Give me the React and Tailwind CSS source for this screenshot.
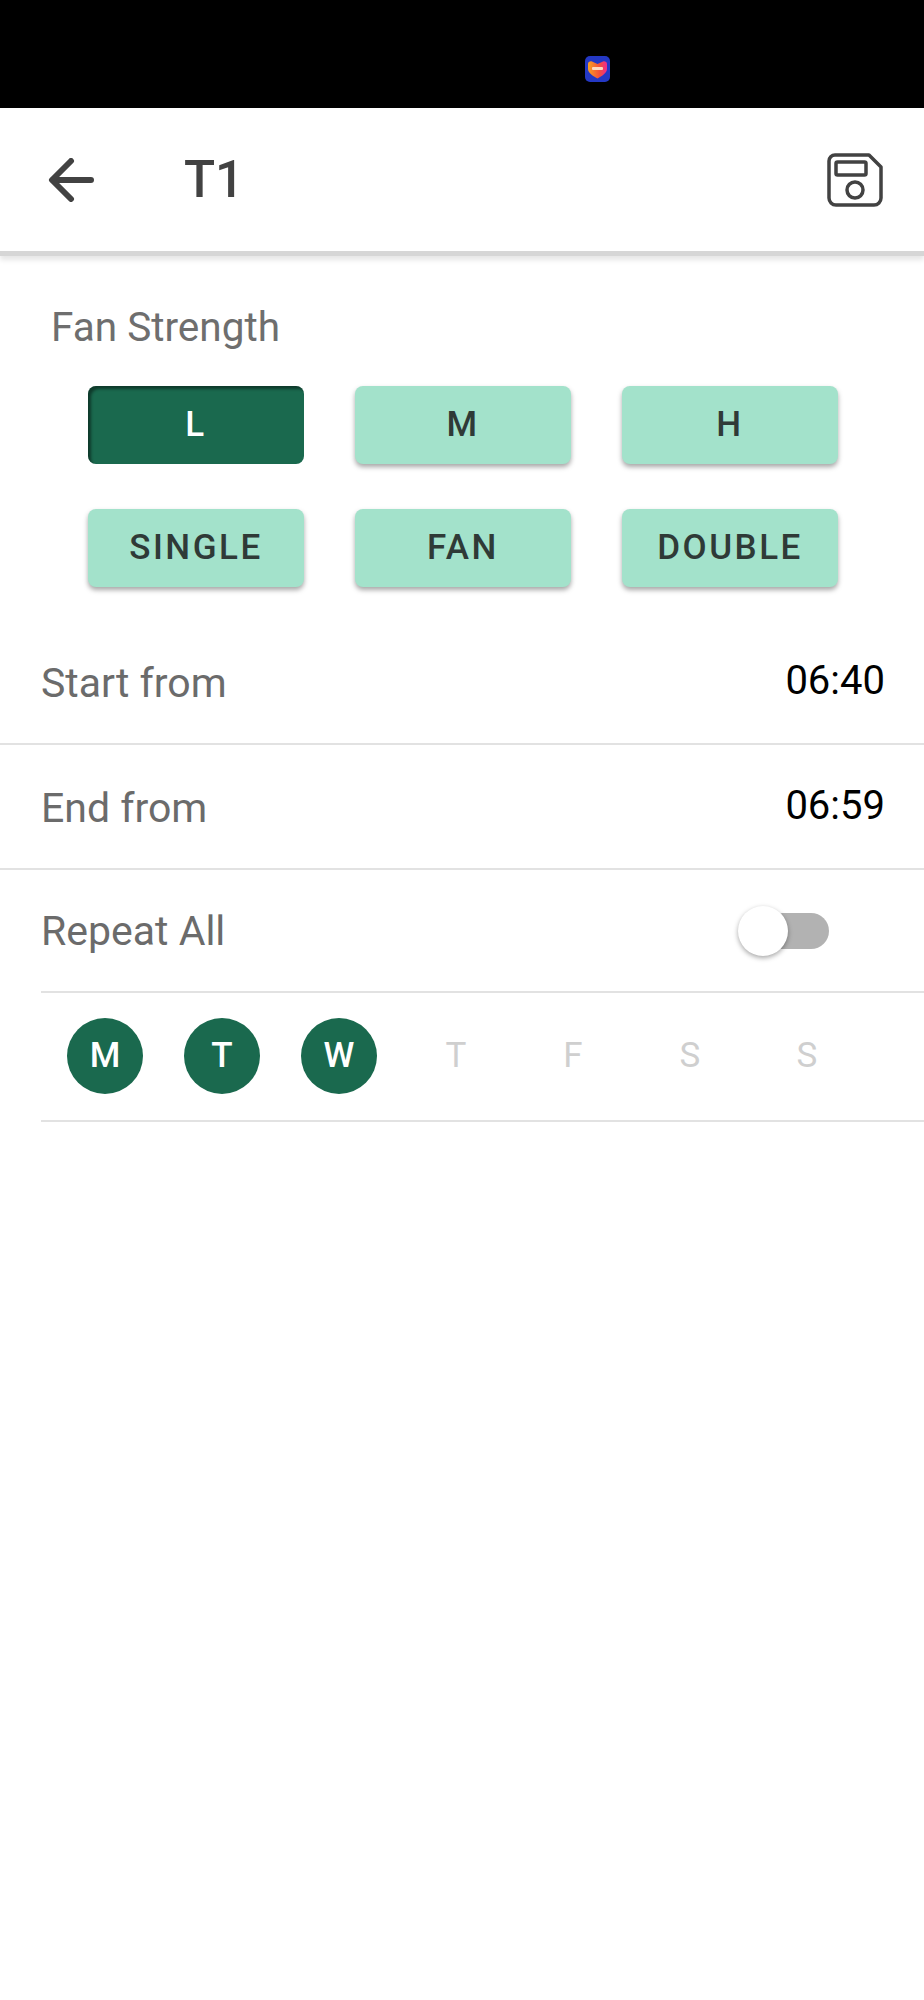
const BUTTONS = [
  [{ label: 'L', active: true }, { label: 'M' }, { label: 'H' }],
  [{ label: 'SINGLE' }, { label: 'FAN' }, { label: 'DOUBLE' }],
];

const DAYS = [
  { label: 'M', on: true },
  { label: 'T', on: true },
  { label: 'W', on: true },
  { label: 'T' },
  { label: 'F' },
  { label: 'S' },
  { label: 'S' },
];

function AppLogo() {
  return (
    <svg className="w-[25px] h-[26px]" viewBox="0 0 25 26">
      <defs>
        <linearGradient id="heart" x1="0" y1="0" x2="1" y2="0">
          <stop offset="0" stopColor="#f8a020" />
          <stop offset="0.6" stopColor="#f5503a" />
          <stop offset="1" stopColor="#ee2a90" />
        </linearGradient>
      </defs>
      <rect width="25" height="26" rx="5" fill="#2438c4" />
      <path d="M3 8c0-2 2-3 4-2.500l5.500 2.500 5.500-2.500c2-.5 4 .5 4 2.500v5c0 4-5 7-9.500 9.500C8 20 3 17 3 13z" fill="url(#heart)" />
      <rect x="7" y="11" width="11" height="3" rx="1" fill="#ffd9c0" />
    </svg>
  );
}

function BackIcon() {
  return (
    <svg className="w-[46px] h-[44px]" viewBox="0 0 46 44" fill="none" stroke="#424242" strokeWidth="6" strokeLinecap="round" strokeLinejoin="round">
      <path d="M43 22H5" />
      <path d="M23 3L4 22l19 19" />
    </svg>
  );
}

function SaveIcon() {
  return (
    <svg className="w-[56px] h-[54px]" viewBox="0 0 56 54" fill="none" stroke="#424242" strokeWidth="3.5">
      <path d="M8 2h34l12 12v31a7 7 0 0 1-7 7H9a7 7 0 0 1-7-7V8a6 6 0 0 1 6-6z" strokeLinejoin="round" />
      <rect x="9" y="9" width="30" height="13" rx="1.5" />
      <circle cx="28" cy="37" r="8" />
    </svg>
  );
}

function TimeRow({ label, time }) {
  return (
    <div className="h-[125px] border-b-2 border-[#e2e2e2] pl-[41px] pr-[39px] flex items-center justify-between">
      <span className="text-[41px] text-[#6b6b6b] mt-[5px]">{label}</span>
      <span className="text-[40px] text-black -mt-[1px]">{time}</span>
    </div>
  );
}

export default function App() {
  return (
    <div className="w-[924px] h-[2000px] bg-white" style={{ fontFamily: 'Roboto, sans-serif' }}>
      {/* Status bar */}
      <div className="h-[108px] bg-black relative">
        <div className="absolute left-[585px] top-[56px]">
          <AppLogo />
        </div>
      </div>

      {/* App bar */}
      <div className="h-[148px] flex items-center pl-[48px] pr-[41px] border-b-[5px] border-[#d6d6d6] shadow-[0_4px_5px_rgba(0,0,0,0.1)]">
        <BackIcon />
        <h1 className="ml-[90px] text-[51px] font-medium text-[#424242] leading-none">T1</h1>
        <div className="ml-auto">
          <SaveIcon />
        </div>
      </div>

      {/* Fan Strength */}
      <div className="pl-[51px] pt-[45px] text-[40.5px] leading-[52px] text-[#6e6e6e]">Fan Strength</div>
      <div className="pl-[88px] pt-[33px] flex flex-col gap-[45px]">
        {BUTTONS.map((row, i) => (
          <div key={i} className="flex gap-[51px]">
            {row.map((b) => (
              <button
                key={b.label}
                className={`w-[216px] h-[78px] rounded-[8px] text-[35px] font-medium tracking-[2.5px] ${
                  b.active
                    ? 'bg-[#1a694e] text-white shadow-[inset_3px_3px_3px_rgba(0,0,0,0.45)]'
                    : 'bg-[#a3e2cb] text-[#2f3a37] shadow-[0_3px_5px_rgba(0,0,0,0.35)]'
                }`}
              >
                {b.label}
              </button>
            ))}
          </div>
        ))}
      </div>

      {/* Times */}
      <div className="mt-[33px]">
        <TimeRow label="Start from" time="06:40" />
        <TimeRow label="End from" time="06:59" />
      </div>

      {/* Repeat All */}
      <div className="ml-[41px] h-[123px] border-b-2 border-[#e2e2e2] flex items-center justify-between pr-[95px]">
        <span className="text-[41px] text-[#6b6b6b] mt-[2px]">Repeat All</span>
        <div className="relative w-[91px] h-[50px] flex items-center justify-end">
          <div className="w-[76px] h-[36px] rounded-full bg-[#b2b2b2]"></div>
          <div className="absolute left-0 top-0 w-[50px] h-[50px] rounded-full bg-white shadow-[0_2px_5px_rgba(0,0,0,0.35)]"></div>
        </div>
      </div>

      {/* Days */}
      <div className="ml-[41px] h-[129px] border-b-2 border-[#e2e2e2] pl-[26px] pb-[2px] flex items-center gap-[41px]">
        {DAYS.map((d, i) => (
          <div
            key={i}
            className={`w-[76px] h-[76px] shrink-0 rounded-full flex items-center justify-center text-[35px] pt-[2px] ${
              d.on ? 'bg-[#1a694e] text-white font-medium' : 'text-[#cfcfcf]'
            }`}
          >
            {d.label}
          </div>
        ))}
      </div>
    </div>
  );
}
